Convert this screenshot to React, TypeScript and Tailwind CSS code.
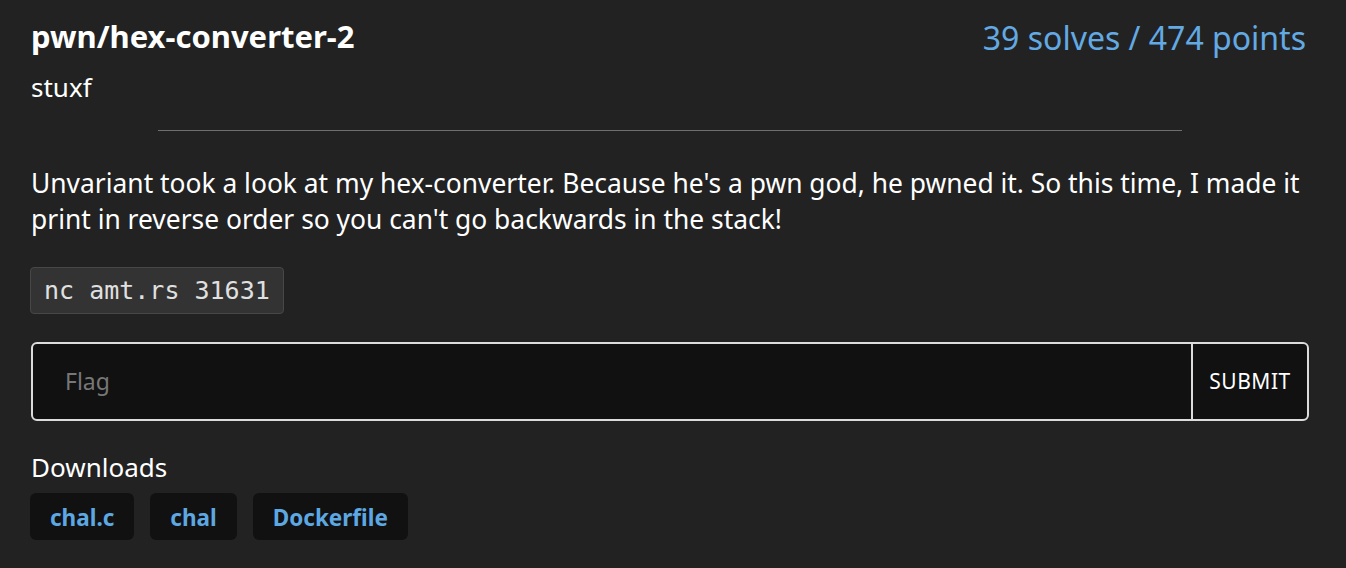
import React from "react";

export default function App() {
  return (
    <div className="min-h-[568px] w-full bg-[#222222] text-white" style={{ fontFamily: '"Noto Sans", "Open Sans", sans-serif' }}>
      <div className="px-[31px] pt-[16px] pr-[37px]">
        <div className="flex items-start justify-between">
          <div className="flex flex-col">
            <h1 className="text-[31px] font-bold leading-[40px]">pwn/hex-converter-2</h1>
            <div className="mt-[13px] text-[26px] leading-[36px]">stuxf</div>
          </div>
          <div className="mr-[3px] text-[32px] leading-[44px] text-[#63aae4]">39 solves / 474 points</div>
        </div>
        <div className="mx-auto mt-[25px] h-px w-[1024px] bg-[#6f6f6f]" />
        <p className="mt-[34px] text-[26.4px] leading-[36px]">
          Unvariant took a look at my hex-converter. Because he's a pwn god, he pwned it. So this time, I made it print in reverse order so you can't go backwards in the stack!
        </p>
        <div className="mt-[30px] ml-[-1px] inline-block rounded-[4px] border border-[#474747] bg-[#333333] px-[13px] py-[5px] text-[25px] leading-[35px] text-[#e0e0e0]" style={{ fontFamily: '"DejaVu Sans Mono", "Liberation Mono", monospace' }}>
          nc amt.rs 31631
        </div>
        <div className="mt-[28px] flex h-[79px] rounded-[6px] border-2 border-[#dcdcdc] bg-[#111111]">
          <div className="flex flex-1 items-center pl-[32px] text-[23px] text-[#777777]">Flag</div>
          <div className="flex w-[116px] items-center justify-center border-l-2 border-[#dcdcdc] text-[21px] tracking-[0.5px]">SUBMIT</div>
        </div>
        <div className="mt-[30px] text-[26px] leading-[32px]">Downloads</div>
        <div className="mt-[10px] ml-[-1px] flex gap-[16px]">
          {["chal.c", "chal", "Dockerfile"].map((f) => (
            <div key={f} className="flex h-[47px] items-center rounded-[6px] bg-[#111111] px-[20px] pt-[3px] text-[22.5px] font-bold text-[#5da8e2]">
              {f}
            </div>
          ))}
        </div>
      </div>
    </div>
  );
}
